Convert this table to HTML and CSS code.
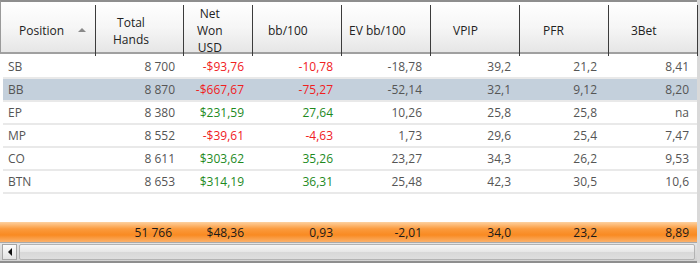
FILE: index.html
```html
<!DOCTYPE html>
<html>
<head>
<meta charset="utf-8">
<link rel="stylesheet" href="styles.css">
</head>
<body>
<div class="grid">
  <div class="head">
    <div class="hc c-pos"><span class="ht">Position</span><span class="sort"></span></div>
    <div class="hc c-th"><span class="ht">Total<br>Hands</span></div>
    <div class="hc c-nw"><span class="ht">Net<br>Won<br>USD</span></div>
    <div class="hc c-bb"><span class="ht">bb/100</span></div>
    <div class="hc c-ev"><span class="ht">EV bb/100</span></div>
    <div class="hc c-vp"><span class="ht">VPIP</span></div>
    <div class="hc c-pf"><span class="ht">PFR</span></div>
    <div class="hc c-3b last"><span class="ht">3Bet</span></div>
  </div>
  <div class="rows">
    <div class="row"><span class="pos">SB</span><span>8 700</span><span class="neg">-$93,76</span><span class="neg">-10,78</span><span>-18,78</span><span>39,2</span><span class="pfr">21,2</span><span>8,41</span></div>
    <div class="row sel"><span class="pos">BB</span><span>8 870</span><span class="neg">-$667,67</span><span class="neg">-75,27</span><span>-52,14</span><span>32,1</span><span class="pfr">9,12</span><span>8,20</span></div>
    <div class="row"><span class="pos">EP</span><span>8 380</span><span class="pos-v">$231,59</span><span class="pos-v">27,64</span><span>10,26</span><span>25,8</span><span class="pfr">25,8</span><span>na</span></div>
    <div class="row"><span class="pos">MP</span><span>8 552</span><span class="neg">-$39,61</span><span class="neg">-4,63</span><span>1,73</span><span>29,6</span><span class="pfr">25,4</span><span>7,47</span></div>
    <div class="row"><span class="pos">CO</span><span>8 611</span><span class="pos-v">$303,62</span><span class="pos-v">35,26</span><span>23,27</span><span>34,3</span><span class="pfr">26,2</span><span>9,53</span></div>
    <div class="row"><span class="pos">BTN</span><span>8 653</span><span class="pos-v">$314,19</span><span class="pos-v">36,31</span><span>25,48</span><span>42,3</span><span class="pfr">30,5</span><span>10,6</span></div>
  </div>
  <div class="filler"></div>
  <div class="total"><span></span><span>51 766</span><span>$48,36</span><span>0,93</span><span>-2,01</span><span>34,0</span><span class="pfr">23,2</span><span>8,89</span></div>
  <div class="hscroll">
    <div class="sbtn"><span class="larrow"></span></div>
    <div class="thumb"></div>
  </div>
</div>
</body>
</html>
```
FILE: styles.css
```css
* { box-sizing: border-box; }
html, body { margin: 0; padding: 0; }
body {
  width: 700px;
  height: 263px;
  overflow: hidden;
  background: #ffffff;
  font-family: "Open Sans", "Noto Sans", sans-serif;
  font-size: 12px;
}
.grid {
  width: 700px;
  height: 263px;
  display: flex;
  flex-direction: column;
  border-right: 3px solid #d9d9d9;
}
.head {
  height: 54px;
  display: grid;
  grid-template-columns: 95px 88px 69px 89px 89px 89px 89px 89px;
  border-top: 2px solid #8e8e8e;
  border-bottom: 2px solid #a0a0a0;
  border-left: 1px solid #9a9a9a;
  background: linear-gradient(#ffffff 0%, #f6f6f6 50%, #e6e6e6 100%);
  color: #222;
  line-height: 17px;
}
.hc {
  position: relative;
  display: flex;
  align-items: center;
  border-right: 1px solid #3c3c3c;
  margin: 3px 0 0 0;
}
.ht { display: inline-block; text-align: center; }
.c-pos { padding-left: 18px; }
.c-th { padding-left: 17px; }
.c-nw { padding-left: 13px; }
.c-bb { padding-left: 15px; }
.c-ev { padding-left: 7px; }
.c-vp { padding-left: 22px; }
.c-pf { padding-left: 23px; }
.c-3b { padding-left: 22px; }
.sort {
  position: absolute;
  left: 77px;
  top: 23px;
  width: 0;
  height: 0;
  border-left: 4px solid transparent;
  border-right: 4px solid transparent;
  border-bottom: 4px solid #8a8a8a;
}
.rows { display: flex; flex-direction: column; padding-top: 2px; }
.row, .total {
  display: grid;
  grid-template-columns: 92px 88px 69px 89px 89px 89px 89px 89px;
  align-items: center;
}
.row {
  height: 23px;
  margin-left: 3px;
  border-bottom: 2px solid #e9e9e9;
  color: #555555;
}
.row.sel { background: #c4d0dc; }
.row span, .total span { text-align: right; padding-right: 8px; }
.row span.pos { text-align: left; padding-left: 5px; }
.row span.pfr, .total span.pfr { padding-right: 11px; }
.neg { color: #f0201e; }
.pos-v { color: #1e8a1e; }
.filler { flex: 1; }
.total {
  height: 20px;
  grid-template-columns: 95px 88px 69px 89px 89px 89px 89px 89px;
  background: linear-gradient(#fdd1a0 0%, #fb9a3c 35%, #f98a22 65%, #fbb16a 100%);
  color: #1a1a1a;
}
.total span:nth-child(2) { padding-right: 11px; }
.hscroll {
  height: 21px;
  display: flex;
  align-items: center;
  gap: 2px;
  padding: 0 2px;
  border-top: 1px solid #a9a9a9;
  border-bottom: 2px solid #8e8e8e;
  background: linear-gradient(#e4e4e4, #d2d2d2);
}
.sbtn {
  width: 15px;
  height: 16px;
  border: 1px solid #a5a5a5;
  background: linear-gradient(#fbfbfb, #e2e2e2);
  display: flex;
  align-items: center;
  justify-content: center;
}
.larrow {
  width: 0;
  height: 0;
  border-top: 4px solid transparent;
  border-bottom: 4px solid transparent;
  border-right: 4px solid #111;
}
.thumb {
  flex: 1;
  height: 16px;
  border: 1px solid #b3b3b3;
  border-radius: 2px;
  background: linear-gradient(#f6f6f6 0%, #e6e6e6 50%, #d8d8d8 51%, #dedede 100%);
}
```
